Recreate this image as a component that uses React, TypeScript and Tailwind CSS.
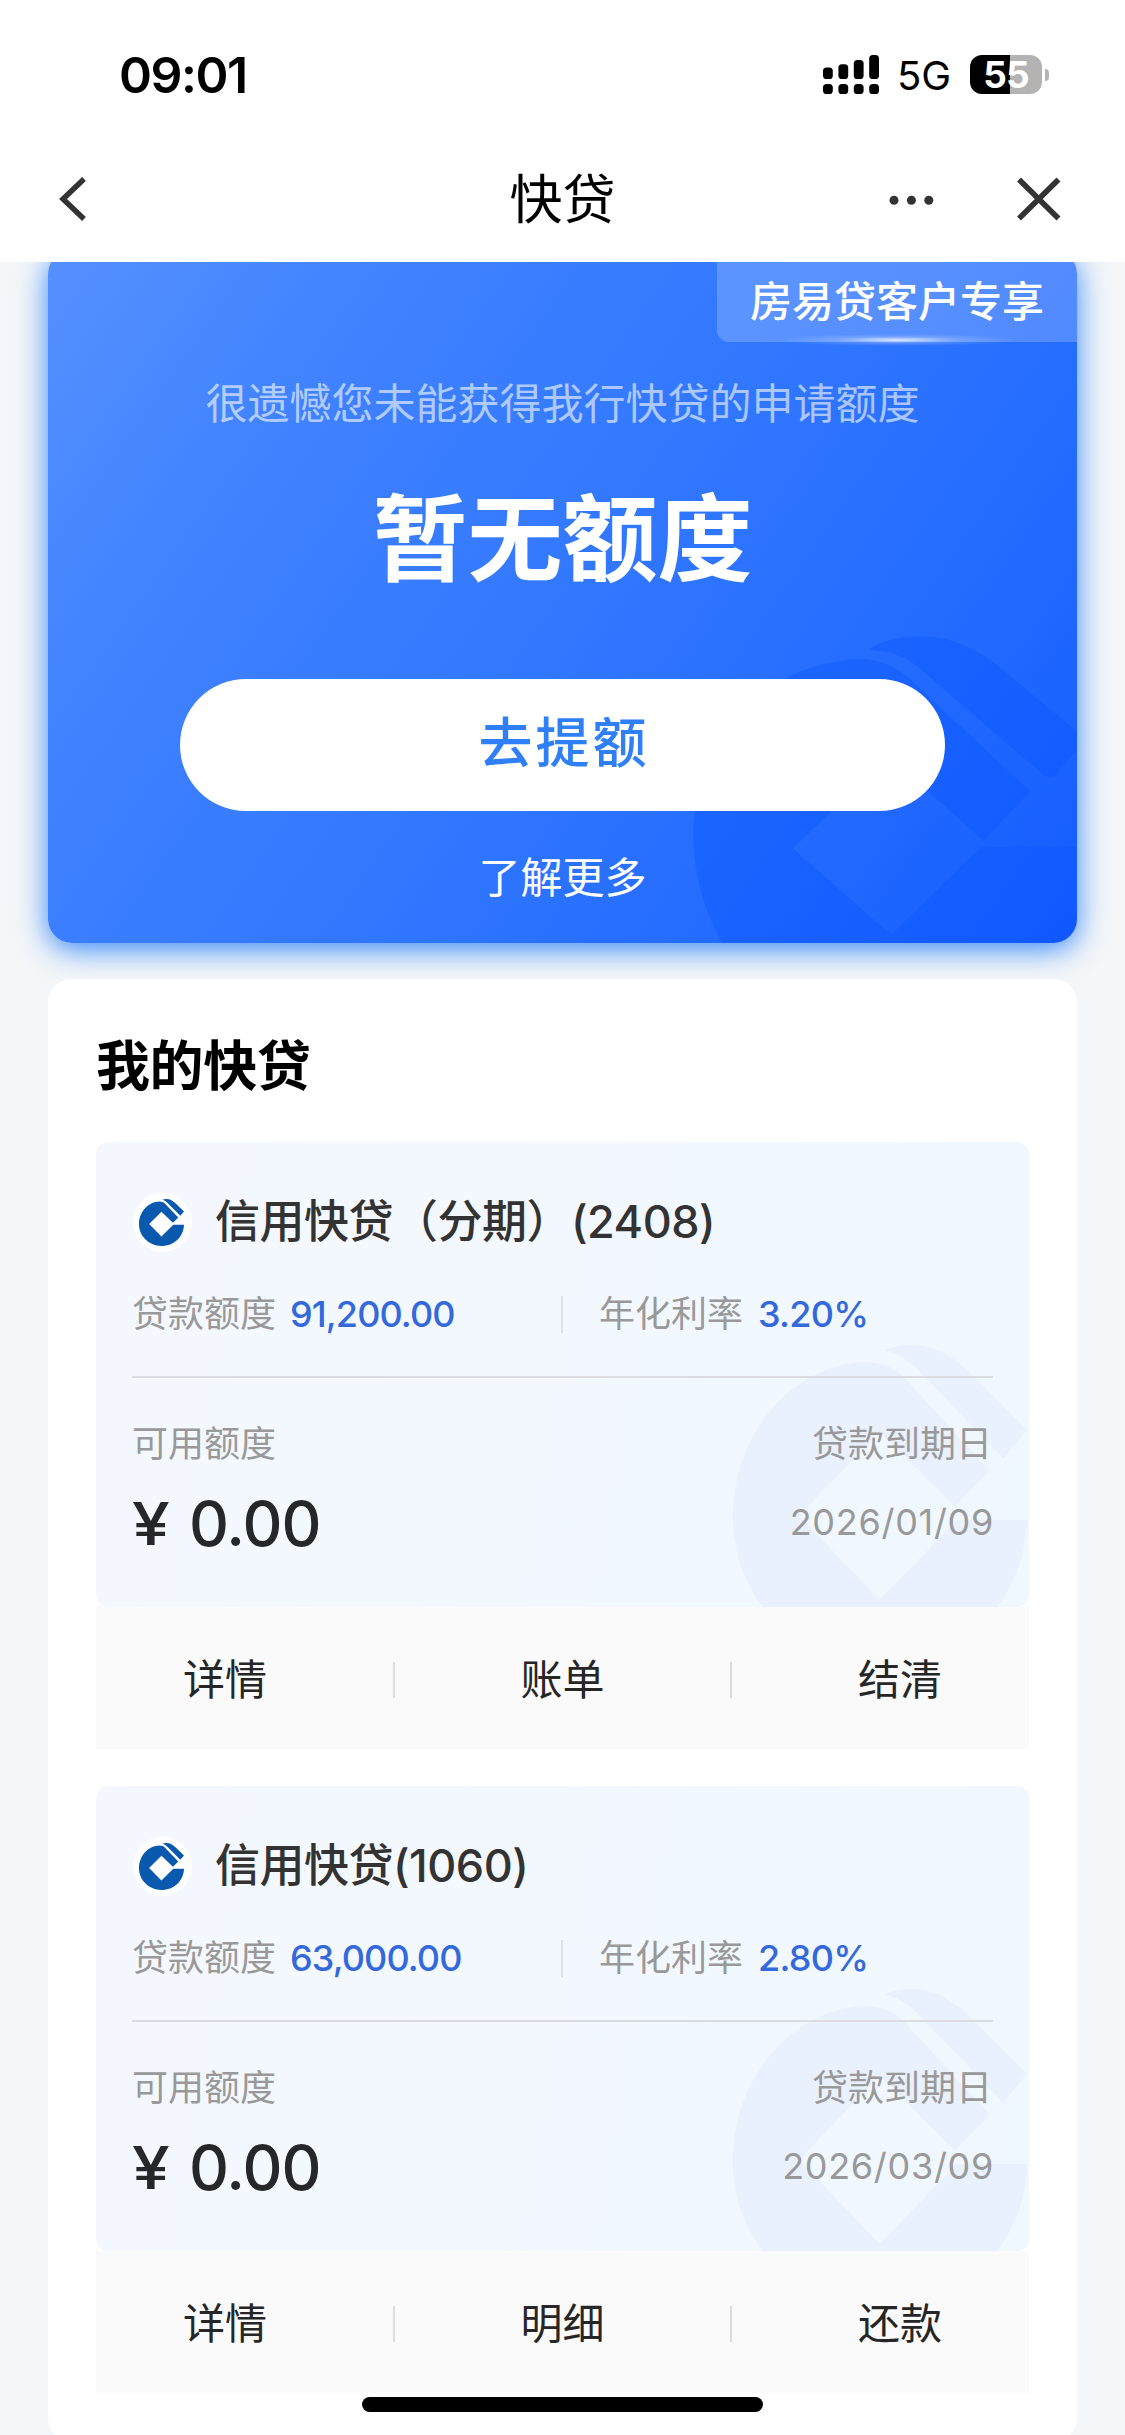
interface Loan {
    name: string;
    limit: string;
    rate: string;
    available: string;
    dueDate: string;
    actions: string[];
}

const loans: Loan[] = [
    {
        name: '信用快贷（分期）(2408)',
        limit: '91,200.00',
        rate: '3.20%',
        available: '0.00',
        dueDate: '2026/01/09',
        actions: ['详情', '账单', '结清'],
    },
    {
        name: '信用快贷(1060)',
        limit: '63,000.00',
        rate: '2.80%',
        available: '0.00',
        dueDate: '2026/03/09',
        actions: ['详情', '明细', '还款'],
    },
];

function BankMark({ className }: { className?: string }) {
    return (
        <svg viewBox="520 645 882 960" preserveAspectRatio="none" fill="currentColor" className={className}>
            <path d="M1035 745C1005 712 965 697 915 697C720 700 520 890 520 1163C520 1410 720 1605 962 1605C1205 1605 1396 1415 1402 1170H1192L960 1410L718 1157L960 905L1185 1128L1290 1022Z" />
            <path d="M975 660C1005 650 1030 645 1055 645C1130 645 1190 688 1235 733L1402 900L1330 985L1085 730C1050 692 1020 672 975 660Z" />
        </svg>
    );
}

function StatusBar() {
    return (
        <div className="flex h-[144px] items-start justify-between pl-[119px] pr-[76px]">
            <div className="mt-[44px] text-[50px] font-semibold leading-[62px] tracking-[-1.5px] text-black">09:01</div>
            <div className="mt-[55px] flex h-[39px] items-center">
                <svg viewBox="0 0 56 39" className="h-[39px] w-[56px]" fill="#000">
                    <rect x="0" y="12.5" width="9.8" height="11.5" rx="3.6" />
                    <rect x="15.4" y="9.2" width="9.8" height="14.8" rx="3.6" />
                    <rect x="30.8" y="5" width="9.8" height="19" rx="3.6" />
                    <rect x="46.2" y="0" width="9.8" height="24" rx="3.6" />
                    <rect x="0" y="29" width="9.8" height="10" rx="3.6" />
                    <rect x="15.4" y="29" width="9.8" height="10" rx="3.6" />
                    <rect x="30.8" y="29" width="9.8" height="10" rx="3.6" />
                    <rect x="46.2" y="29" width="9.8" height="10" rx="3.6" />
                </svg>
                <span className="ml-[18px] mt-[2px] w-[55px] text-[40px] leading-none text-black">5G</span>
                <div className="ml-[18px] flex h-[39px] w-[72px] items-center justify-center rounded-[12px] bg-[linear-gradient(90deg,#000_55%,#b3b3b3_55%)] text-[37px] font-bold leading-none tracking-[-1px] text-white">
                    55
                </div>
                <div className="ml-[3px] h-[12px] w-[4px] rounded-r-full bg-[#b3b3b3]" />
            </div>
        </div>
    );
}

function NavBar() {
    return (
        <div className="grid h-[118px] grid-cols-3 items-start px-[56px] pt-[30px]">
            <svg viewBox="0 0 30 50" className="h-[50px] w-[30px]" fill="none" stroke="#333" strokeWidth="5.4">
                <path d="M28 5L7 25L28 45" />
            </svg>
            <h1 className="text-center text-[53px] leading-[52px] text-black">快贷</h1>
            <div className="flex items-center justify-end gap-[80px]">
                <svg viewBox="0 0 45 50" className="h-[50px] w-[45px]" fill="#333">
                    <circle cx="5" cy="26.3" r="4.5" />
                    <circle cx="22.4" cy="26.3" r="4.5" />
                    <circle cx="39.8" cy="26.3" r="4.5" />
                </svg>
                <svg viewBox="0 0 50 50" className="mr-[5px] h-[50px] w-[50px]" fill="none" stroke="#333" strokeWidth="5.6">
                    <path d="M5 5.5L44.5 44.5M44.5 5.5L5 44.5" />
                </svg>
            </div>
        </div>
    );
}

function HeroCard() {
    return (
        <section className="relative flex h-[693px] flex-col items-center rounded-[24px] bg-[linear-gradient(125deg,#5590ff_0%,#3f81ff_25%,#3278ff_50%,#246cff_75%,#155cff_100%)] shadow-[0_6px_30px_#3287fa]">
            <svg
                viewBox="270 100 1155 929"
                preserveAspectRatio="none"
                className="absolute bottom-0 right-0 h-[310px] w-[387px] rounded-br-[24px]"
                fill="#0a55ff"
                fillOpacity="0.38"
            >
                <path d="M780 178C480 190 280 430 280 700C280 830 315 930 365 1029L365 1100H1425V740H1140L870 1005L577 745L865 470L1145 722L1285 575L960 270C900 205 840 178 780 178Z" />
                <path d="M800 150C850 120 900 110 960 110C1060 110 1140 160 1190 200L1425 395V450L1360 525Q1340 540 1320 520L960 210C910 165 870 155 800 150Z" />
            </svg>
            <div className="absolute right-0 top-0 flex h-[92px] w-[360px] items-center justify-center rounded-bl-[12px] rounded-tr-[24px] bg-white/20 pt-[11px] text-[42px] font-medium text-white">
                房易贷客户专享
                <div className="absolute -bottom-[4px] left-[60px] h-[12px] w-[240px] bg-[radial-gradient(closest-side,rgba(255,255,255,0.8),rgba(255,255,255,0.2)_50%,rgba(255,255,255,0))]" />
            </div>
            <p className="mt-[124px] text-[42px] leading-[60px] text-white/60">很遗憾您未能获得我行快贷的申请额度</p>
            <p className="mt-[46px] text-[95px] font-bold leading-[120px] text-white">暂无额度</p>
            <button className="relative mt-[79px] h-[132px] w-[765px] rounded-full bg-white pb-[4px] pl-[3px] text-[54px] font-medium tracking-[3px] text-[#2f80f8]">
                去提额
            </button>
            <a className="relative mt-[37px] text-[42px] leading-[60px] text-white">了解更多</a>
        </section>
    );
}

function LoanCard({ loan }: { loan: Loan }) {
    return (
        <article>
            <div className="relative h-[465px] overflow-hidden rounded-[12px] bg-[linear-gradient(100deg,#f4f8fe_0%,#f3f8ff_50%,#eff7ff_100%)] px-[36px]">
                <BankMark className="absolute left-[637px] top-[203px] h-[320px] w-[294px] text-[#e9f0fe]" />
                <div className="relative flex h-full flex-col">
                    <div className="mt-[51px] flex h-[58px] items-center">
                        <span className="ml-[1px] flex h-[59px] w-[59px] shrink-0 items-center justify-center rounded-full bg-white">
                            <BankMark className="-ml-[2px] h-[47px] w-[45px] text-[#0959ae]" />
                        </span>
                        <h3 className="ml-[23px] text-[45px] font-medium leading-[58px] tracking-[-0.5px] text-[#333]">{loan.name}</h3>
                    </div>
                    <div className="mt-[38px] flex h-[50px] items-center text-[36px]">
                        <div className="flex w-[429px] items-center">
                            <span className="text-[#999]">贷款额度</span>
                            <span className="ml-[14px] font-medium tracking-[-0.9px] text-[#3469dc]">{loan.limit}</span>
                        </div>
                        <div className="h-[37px] w-[2px] bg-[#dfe1e5]" />
                        <span className="ml-[36px] text-[#999]">年化利率</span>
                        <span className="ml-[15px] font-medium tracking-[-0.7px] text-[#3469dc]">{loan.rate}</span>
                    </div>
                    <div className="mt-[37px] h-[2px] bg-[#dadce0]" />
                    <div className="mt-[41px] flex items-start justify-between">
                        <div>
                            <p className="text-[36px] leading-[50px] text-[#999]">可用额度</p>
                            <p className="mt-[15px] flex items-center text-[62px] font-medium leading-[80px] tracking-[-1px] text-[#262729]">
                                <span className="w-[57px] origin-left scale-x-115 text-[59px]">¥</span>
                                {loan.available}
                            </p>
                        </div>
                        <div className="text-right text-[36px] leading-[50px] text-[#999]">
                            <p className="pr-[1px]">贷款到期日</p>
                            <p className="-mr-[1px] mt-[28px] tracking-[0.7px]">{loan.dueDate}</p>
                        </div>
                    </div>
                </div>
            </div>
            <div className="flex h-[142px] items-center justify-between bg-[#fafafa] px-[87px] pt-[3px] text-[42px] text-[#262626]">
                {loan.actions.map((action, index) => (
                    <div key={action} className="contents">
                        {index > 0 && <div className="h-[36px] w-[2px] bg-[#dddddd]" />}
                        <button className="leading-[60px]">{action}</button>
                    </div>
                ))}
            </div>
        </article>
    );
}

export default function App() {
    return (
        <div className="relative h-[2435px] w-[1125px] overflow-hidden bg-[#f4f6f8] font-['Inter','Noto_Sans_CJK_SC',sans-serif]">
            <header className="h-[262px] bg-white">
                <StatusBar />
                <NavBar />
            </header>
            <main className="h-[2173px] overflow-hidden px-[48px]">
                <div className="-mt-[12px]">
                    <HeroCard />
                </div>
                <section className="relative mt-[36px] h-[1463px] rounded-[24px] bg-white px-[48px] pt-[50px]">
                    <h2 className="text-[54px] font-bold leading-[76px] tracking-[-0.4px] text-black">我的快贷</h2>
                    <div className="mt-[37px] flex w-[933px] flex-col gap-[37px]">
                        {loans.map((loan) => (
                            <LoanCard key={loan.name} loan={loan} />
                        ))}
                    </div>
                </section>
            </main>
            {/* Home indicator */}
            <div className="absolute bottom-[23px] left-[362px] h-[15px] w-[401px] rounded-full bg-black" />
        </div>
    );
}
